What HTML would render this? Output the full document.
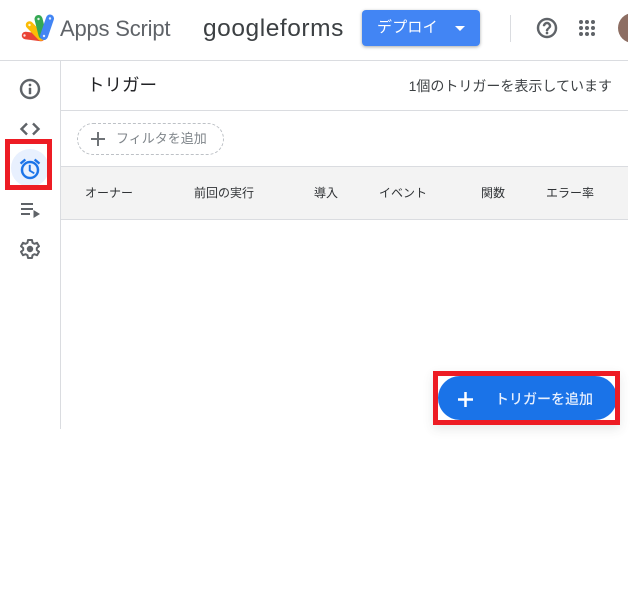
<!DOCTYPE html>
<html lang="ja"><head><meta charset="utf-8"><style>
html,body{margin:0;padding:0;background:#fff}
body{width:640px;height:616px;position:relative;overflow:hidden;font-family:"Liberation Sans","Noto Sans CJK JP",sans-serif;color:#3c4043}
.a{position:absolute;white-space:nowrap}
.th{position:absolute;top:184px;font-size:12px;line-height:18px;color:#303336;white-space:nowrap}
.ic path{stroke:#5f6368;stroke-width:.45}
</style></head><body>
<svg class="a" style="left:0;top:0" width="60" height="50" viewBox="0 0 60 50" fill="none" stroke-linecap="round">
<path d="M25.500 35.500L41 37.500" stroke="#ea4335" stroke-width="7.500"/>
<path d="M29.500 25L41 37" stroke="#fbbc04" stroke-width="7.500"/>
<path d="M38.500 19L42.500 35" stroke="#34a853" stroke-width="8"/>
<path d="M50 18.500L44 36" stroke="#4285f4" stroke-width="8"/>
<g fill="#fff" stroke="none" opacity=".85"><circle cx="24.500" cy="35.500" r="1.200"/><circle cx="29.500" cy="25" r="1.200"/><circle cx="38.500" cy="19" r="1.200"/><circle cx="50" cy="18.500" r="1.200"/><circle cx="44" cy="36" r="1.200"/></g>
</svg>
<div class="a" style="left:60px;top:15px;font-size:22px;line-height:28px;color:#5f6368;letter-spacing:-.2px">Apps Script</div>
<div class="a" style="left:203px;top:14px;font-size:24.500px;line-height:30px;color:#3c4043;letter-spacing:.55px">googleforms</div>
<div class="a" style="left:362px;top:10px;width:118px;height:36px;background:#4285f4;border-radius:4px;box-shadow:0 1px 3px rgba(60,64,67,.45)"></div>
<div class="a" style="left:377px;top:18px;font-size:15px;line-height:20px;color:#fff;letter-spacing:.2px">デプロイ</div>
<div class="a" style="left:455px;top:26px;width:0;height:0;border-left:5px solid transparent;border-right:5px solid transparent;border-top:5px solid #fff"></div>
<div class="a" style="left:510px;top:15px;width:1px;height:27px;background:#dadce0"></div>
<svg class="a ic" style="left:535px;top:16px" width="24" height="24" viewBox="0 0 24 24"><path fill="#5f6368" d="M11 18h2v-2h-2v2zm1-16C6.480 2 2 6.480 2 12s4.480 10 10 10 10-4.480 10-10S17.520 2 12 2zm0 18c-4.410 0-8-3.590-8-8s3.590-8 8-8 8 3.590 8 8-3.590 8-8 8zm0-14c-2.210 0-4 1.790-4 4h2c0-1.100.9-2 2-2s2 .9 2 2c0 2-3 1.750-3 5h2c0-2.250 3-2.500 3-5 0-2.210-1.790-4-4-4z"/></svg>
<svg class="a" style="left:578px;top:19px" width="18" height="18" viewBox="0 0 18 18" fill="#5f6368"><circle cx="3" cy="3" r="2"/><circle cx="9" cy="3" r="2"/><circle cx="15" cy="3" r="2"/><circle cx="3" cy="9" r="2"/><circle cx="9" cy="9" r="2"/><circle cx="15" cy="9" r="2"/><circle cx="3" cy="15" r="2"/><circle cx="9" cy="15" r="2"/><circle cx="15" cy="15" r="2"/></svg>
<div class="a" style="left:618px;top:13px;width:10px;height:30px;overflow:hidden"><div style="width:30px;height:30px;border-radius:50%;background:#8d6e63"></div></div>

<div class="a" style="left:0;top:60px;width:628px;height:1px;background:#dadce0"></div>
<div class="a" style="left:60px;top:60px;width:1px;height:369px;background:#dadce0"></div>
<div class="a" style="left:61px;top:110px;width:567px;height:1px;background:#dadce0"></div>
<div class="a" style="left:61px;top:166px;width:567px;height:54px;box-sizing:border-box;background:#f3f3f3;border-top:1px solid #dadce0;border-bottom:1px solid #dadce0"></div>

<svg class="a ic" style="left:18px;top:77px" width="24" height="24" viewBox="0 0 24 24"><path fill="#5f6368" d="M11 7h2v2h-2zm0 4h2v6h-2zm1-9C6.480 2 2 6.480 2 12s4.480 10 10 10 10-4.480 10-10S17.520 2 12 2zm0 18c-4.410 0-8-3.590-8-8s3.590-8 8-8 8 3.590 8 8-3.590 8-8 8z"/></svg>
<svg class="a" style="left:18px;top:117px" width="24" height="24" viewBox="0 0 24 24"><path fill="none" stroke="#5f6368" stroke-width="2.400" d="M9 6.500L3.500 12 9 17.500M15 6.500L20.500 12 15 17.500"/></svg>
<div class="a" style="left:11px;top:149px;width:38px;height:38px;border-radius:50%;background:#e8f0fe"></div>
<svg class="a" style="left:18px;top:157px" width="24" height="24" viewBox="0 0 24 24"><path fill="#1a73e8" stroke="#1a73e8" stroke-width=".45" d="M22 5.720l-4.600-3.860-1.290 1.530 4.600 3.860L22 5.720zM7.880 3.390L6.600 1.860 2 5.710l1.290 1.530 4.590-3.850zM12.500 8H11v6l4.750 2.850.75-1.230-4-2.370V8zM12 4c-4.970 0-9 4.030-9 9s4.030 9 9 9 9-4.030 9-9-4.030-9-9-9zm0 16c-3.870 0-7-3.130-7-7s3.130-7 7-7 7 3.130 7 7-3.130 7-7 7z"/></svg>
<svg class="a" style="left:18px;top:198px" width="24" height="24" viewBox="0 0 24 24" fill="#5f6368"><rect x="3" y="5" width="12" height="2"/><rect x="3" y="10" width="12" height="2"/><rect x="3" y="15" width="9" height="2"/><path d="M15.500 12v8l6.500-4z"/></svg>
<svg class="a" style="left:18px;top:237px" width="24" height="24" viewBox="0 0 24 24"><path fill="none" stroke="#5f6368" stroke-width="2" stroke-linejoin="round" d="M10 3h4l.5 2.800 1.800 1 2.700-1 2 3.400-2.200 1.800v2l2.200 1.800-2 3.400-2.700-1-1.800 1L14 21h-4l-.5-2.800-1.800-1-2.700 1-2-3.400L5.200 13v-2L3 9.200l2-3.400 2.700 1 1.800-1z"/><circle cx="12" cy="12" r="3.200" fill="#5f6368"/></svg>
<div class="a" style="left:5px;top:139px;width:47px;height:51px;box-sizing:border-box;border:5px solid #ed1c24"></div>

<div class="a" style="left:87px;top:73px;font-size:17.500px;line-height:24px;color:#202124">トリガー</div>
<div class="a" style="right:28px;top:76px;font-size:14px;line-height:20px;color:#3c4043">1個のトリガーを表示しています</div>

<div class="a" style="left:77px;top:123px;width:147px;height:32px;box-sizing:border-box;border:1px dashed #bdc1c6;border-radius:16px"></div>
<svg class="a" style="left:91px;top:132px" width="14" height="14" viewBox="0 0 14 14"><path fill="none" stroke="#6f7377" stroke-width="2" d="M0 7h14M7 0v14"/></svg>
<div class="a" style="left:116px;top:129px;font-size:13px;line-height:19px;color:#80868b">フィルタを追加</div>

<div class="th" style="left:85px">オーナー</div>
<div class="th" style="left:194px">前回の実行</div>
<div class="th" style="left:314px">導入</div>
<div class="th" style="left:379px">イベント</div>
<div class="th" style="left:481px">関数</div>
<div class="th" style="left:546px">エラー率</div>

<div class="a" style="left:438px;top:376px;width:179px;height:44px;border-radius:22px;background:#1a73e8"></div>
<div class="a" style="left:433px;top:371px;width:187px;height:54px;box-sizing:border-box;border:5px solid #ed1c24;box-shadow:0 4px 10px rgba(60,64,67,.12)"></div>
<svg class="a" style="left:458px;top:392px" width="15" height="15" viewBox="0 0 15 15"><path fill="none" stroke="#fff" stroke-width="2.500" d="M0 7.500h15M7.500 0v15"/></svg>
<div class="a" style="left:495px;top:389px;font-size:14px;line-height:20px;color:#e8f0fe;font-weight:500">トリガーを追加</div>
</body></html>
